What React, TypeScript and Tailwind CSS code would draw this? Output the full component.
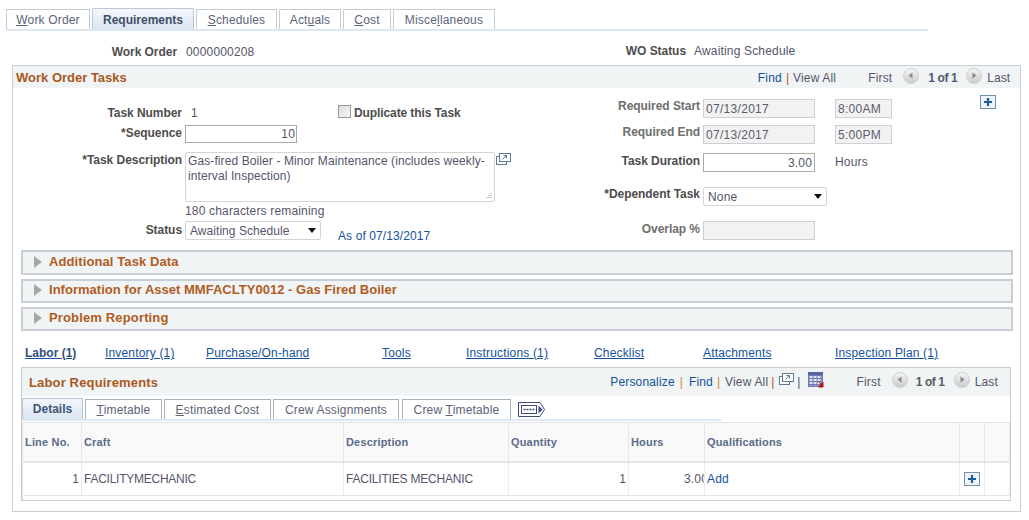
import React from "react";

const PlusIcon = () => (
  <svg width="16" height="14" viewBox="0 0 16 14" className="block">
    <rect x="0.5" y="0.5" width="15" height="13" fill="#f0f4f8" stroke="#6f93ad" />
    <path d="M8 3v8M4 7h8" stroke="#1d5f9c" strokeWidth="2.2" />
  </svg>
);

const PopupIcon = ({ className = "" }: { className?: string }) => (
  <svg width="15" height="12" viewBox="0 0 15 12" className={className}>
    <rect x="0.5" y="3.5" width="10" height="8" fill="#fff" stroke="#5f7a96" />
    <rect x="3.5" y="0.5" width="11" height="8" fill="#fff" stroke="#5f7a96" />
    <path d="M6.5 6.5l4-4M7.5 2.5h3v3" stroke="#5f7a96" fill="none" />
  </svg>
);

const NavBtn = ({ dir }: { dir: "l" | "r" }) => (
  <svg width="16" height="16" viewBox="0 0 16 16" className="block">
    <defs>
      <linearGradient id={"g" + dir} x1="0" y1="0" x2="0" y2="1">
        <stop offset="0" stopColor="#f6f6f6" />
        <stop offset="1" stopColor="#c9c9c9" />
      </linearGradient>
    </defs>
    <circle cx="8" cy="8" r="7.500" fill={"url(#g" + dir + ")"} stroke="#d0d0d0" />
    {dir === "l" ? <path d="M9.500 4.500v6l-4-3z" fill="#8a8a8a" /> : <path d="M6.500 4.500v6l4-3z" fill="#8a8a8a" />}
  </svg>
);

const GridIcon = () => (
  <svg width="16" height="16" viewBox="0 0 16 16" className="block">
    <rect x="0" y="0" width="15" height="15" fill="#6f78b0" />
    <rect x="0" y="0" width="15" height="3" fill="#59629f" />
    <path d="M1.500 4h12v9.500h-12z" fill="#dfe3f2" />
    <path d="M5 3v12M9 3v12M13 3v12M0 6.500h15M0 9.500h15M0 12.500h15" stroke="#6f78b0" />
    <path d="M10 9l4 4M15 10.500V15h-4.500z" stroke="#b01010" fill="#b01010" strokeWidth="1" />
  </svg>
);

const MenuTabIcon = () => (
  <svg width="27" height="15" viewBox="0 0 27 15" className="block">
    <path d="M0.500 0.500H22l4.500 7-4.500 7H0.500z" fill="#fff" stroke="#3b4a7d" />
    <rect x="3.500" y="3.500" width="15" height="8" fill="#fff" stroke="#3b4a7d" />
    <path d="M5.500 7.500h11" stroke="#3b4a7d" strokeDasharray="2 1" strokeWidth="1.500" />
    <path d="M20.500 3.500v8l4-4z" fill="#3b4a7d" />
  </svg>
);

const Caret = () => (
  <svg width="8" height="5" viewBox="0 0 8 5" className="block">
    <path d="M0 0h8L4 5z" fill="#111" />
  </svg>
);

const Tri = () => (
  <svg width="8" height="12" viewBox="0 0 8 12" className="block">
    <path d="M0 0l8 6-8 6z" fill="#a8a8a8" />
  </svg>
);

const U = ({ children }: { children: React.ReactNode }) => <span className="underline">{children}</span>;

const Tab = ({ w, active, children }: { w: string; active?: boolean; children: React.ReactNode }) => (
  <div
    className={
      active
        ? `${w} h-[21px] pt-[1px] flex items-center justify-center border border-b-0 border-[#bcc8d8] rounded-t-[2px] bg-gradient-to-b from-[#f4f7fb] to-[#dbe6f3] font-bold text-[#3f4f66] tracking-normal`
        : `${w} h-[20px] pt-[1px] flex items-center justify-center border border-b-0 border-[#c6ccd4] text-[#5a6478]`
    }
  >
    {children}
  </div>
);

const SubTab = ({ w, active, children }: { w: string; active?: boolean; children: React.ReactNode }) => (
  <div
    className={
      active
        ? `${w} h-[21px] flex items-center justify-center border border-b-0 border-[#b9c3cf] bg-gradient-to-b from-[#f4f7fb] to-[#dbe6f3] font-bold text-[#3f5578] tracking-normal`
        : `${w} h-[20px] flex items-center justify-center border border-b-0 border-[#a9b3bf] text-[#5a6478]`
    }
  >
    {children}
  </div>
);

const Label = ({ w, light, children }: { w: string; light?: boolean; children: React.ReactNode }) => (
  <div className={`${w} shrink-0 text-right font-bold tracking-[-0.05px] ${light ? "text-[#6e6e6e]" : "text-[#4d4d4d]"}`}>{children}</div>
);

const Collapsed = ({ title, h, track }: { title: string; h: string; track: string }) => (
  <div className={`${h} ml-[8px] w-[992px] flex items-center border-2 border-[#c9ced6] bg-[#f1f4f5] pl-[11px] gap-[7px]`}>
    <Tri />
    <span className={`text-[13px] font-bold text-[#b05c22] leading-none ${track}`}>{title}</span>
  </div>
);

const Disabled = ({ w, children }: { w: string; children?: React.ReactNode }) => (
  <div className={`${w} h-[19px] border border-[#ccd0d5] bg-[#f2f2f2] pl-[2px] flex items-center text-[#5c5c6c] tracking-[0.3px]`}>{children}</div>
);

const Th = ({ w, children }: { w: string; children?: React.ReactNode }) => (
  <div className={`${w} shrink-0 h-full border-r border-[#e6e6e6] pl-[2px] flex items-center text-[11px] font-bold text-[#5b6b8a]`}>{children}</div>
);

const Td = ({ w, right, children }: { w: string; right?: boolean; children?: React.ReactNode }) => (
  <div className={`${w} shrink-0 h-full border-r border-[#ececec] flex items-center overflow-hidden ${right ? "justify-end pr-[2px]" : "pl-[2px]"}`}>{children}</div>
);

export default function App() {
  return (
    <div className="w-[1029px] h-[520px] overflow-hidden bg-white text-[12px] leading-[14px] tracking-[0.17px] text-[#55556a] font-['Liberation_Sans',Arial,sans-serif]">
      {/* Top tabs */}
      <div className="pt-[8px] ml-[6px] w-[922px] h-[31px] border-b-[2px] border-[#dde8f4] flex items-end gap-[2px]">
        <Tab w="w-[84px]"><span><U>W</U>ork Order</span></Tab>
        <Tab w="w-[102px]" active>Requirements</Tab>
        <Tab w="w-[81px]"><span><U>S</U>chedules</span></Tab>
        <Tab w="w-[62px]"><span>Act<U>u</U>als</span></Tab>
        <Tab w="w-[48px]"><span><U>C</U>ost</span></Tab>
        <Tab w="w-[102px]"><span>Misce<U>l</U>laneous</span></Tab>
      </div>

      {/* WO row */}
      <div className="flex h-[34px] pt-[14px]">
        <Label w="w-[177px]">Work Order</Label>
        <div className="ml-[9px] w-[239px]">0000000208</div>
        <div className="w-[200px] -mt-[1px]"><Label w="w-[261px]">WO Status</Label></div>
        <div className="ml-[69px] -mt-[1px]">Awaiting Schedule</div>
      </div>

      {/* Main box */}
      <div className="ml-[12px] w-[1009px] h-[447px] border border-[#c9ced6]">
        <div className="h-[22px] bg-[#f1f4f5] flex items-center">
          <div className="ml-[3px] pt-[1px] text-[13px] font-bold text-[#a9581e] tracking-normal">Work Order Tasks</div>
          <div className="ml-auto flex items-center pr-[10px] pt-[1px] tracking-normal">
            <span className="text-[#16509b] tracking-[0.17px]">Find</span>
            <span className="ml-[4px] mr-[4px] text-[#b05c22]">|</span>
            <span className="tracking-[0.17px]">View All</span>
            <span className="ml-[32px] tracking-[0.17px]">First</span>
            <span className="ml-[11px] -mt-[4px]"><NavBtn dir="l" /></span>
            <span className="ml-[9px] font-bold text-[#4a5a78] tracking-[-0.4px]">1 of 1</span>
            <span className="ml-[9px] -mt-[4px]"><NavBtn dir="r" /></span>
            <span className="ml-[5px]">Last</span>
          </div>
        </div>

        {/* Form */}
        <div className="flex h-[162px]">
          {/* Left column */}
          <div className="w-[525px] shrink-0 flex flex-col">
            <div className="flex items-center h-[19px] mt-[15px]">
              <Label w="w-[169px]">Task Number</Label>
              <div className="ml-[9px] w-[7px]">1</div>
              <div className="ml-[140px] flex items-center gap-[3px]">
                <div className="w-[13px] h-[13px] -mt-[3px] border border-[#999] bg-gradient-to-br from-[#dcdcdc] to-[#f6f6f6]" />
                <span className="font-bold text-[#4d4d4d] tracking-[-0.1px]">Duplicate this Task</span>
              </div>
            </div>
            <div className="flex items-start h-[20px] mt-[3px]">
              <Label w="w-[169px]"><span className="block pt-[1px]">*Sequence</span></Label>
              <div className="ml-[3px] w-[112px] h-[18px] border border-[#a9a9a9] flex items-center justify-end pr-[1px]">10</div>
            </div>
            <div className="flex items-start h-[50px] mt-[7px]">
              <Label w="w-[169px]"><span className="block pt-[1px]">*Task Description</span></Label>
              <div className="ml-[3px] w-[310px] h-[50px] border border-[#d4d4d4] rounded-[2px] pl-[2px] pt-[1px] leading-[15px] tracking-[0.1px] relative">
                Gas-fired Boiler - Minor Maintenance (includes weekly-interval Inspection)
                <svg width="7" height="7" viewBox="0 0 7 7" className="absolute right-[2px] bottom-[2px]">
                  <path d="M5.500 1.500h1M3.500 3.500h1M5.500 3.500h1M1.500 5.500h1M3.500 5.500h1M5.500 5.500h1" stroke="#999" />
                </svg>
              </div>
              <PopupIcon className="ml-[1px] mt-[1px]" />
            </div>
            <div className="ml-[172px] mt-[2px] h-[14px]">180 characters remaining</div>
            <div className="flex items-start mt-[3px]">
              <Label w="w-[169px]"><span className="block pt-[2px]">Status</span></Label>
              <div className="ml-[3px] w-[136px] h-[19px] border border-[#d4d4d4] rounded-[2px] pl-[4px] pr-[4px] flex items-center justify-between tracking-[0.05px]">
                <span>Awaiting Schedule</span>
                <Caret />
              </div>
              <div className="ml-[17px] mt-[8px] text-[#16509b] tracking-[0.1px]">As of 07/13/2017</div>
            </div>
          </div>

          {/* Right column */}
          <div className="flex-1 flex flex-col">
            <div className="flex items-start mt-[11px] h-[19px]">
              <Label w="w-[162px]" light>Required Start</Label>
              <div className="ml-[3px]"><Disabled w="w-[112px]">07/13/2017</Disabled></div>
              <div className="ml-[20px]"><Disabled w="w-[57px]">8:00AM</Disabled></div>
              <div className="ml-[88px] -mt-[4px]"><PlusIcon /></div>
            </div>
            <div className="flex items-start mt-[7px] h-[19px]">
              <Label w="w-[162px]" light>Required End</Label>
              <div className="ml-[3px]"><Disabled w="w-[112px]">07/13/2017</Disabled></div>
              <div className="ml-[20px]"><Disabled w="w-[57px]">5:00PM</Disabled></div>
            </div>
            <div className="flex items-start mt-[9px] h-[19px]">
              <Label w="w-[162px]"><span className="block pt-[1px]">Task Duration</span></Label>
              <div className="ml-[3px] w-[112px] h-[19px] border border-[#a9a9a9] flex items-center justify-end pr-[2px]">3.00</div>
              <div className="ml-[20px] mt-[2px]">Hours</div>
            </div>
            <div className="flex items-start mt-[15px] h-[19px]">
              <Label w="w-[162px]">*Dependent Task</Label>
              <div className="ml-[3px] w-[124px] h-[19px] border border-[#d4d4d4] rounded-[2px] pl-[4px] pr-[4px] flex items-center justify-between">
                <span>None</span>
                <Caret />
              </div>
            </div>
            <div className="flex items-start mt-[15px] h-[19px]">
              <Label w="w-[162px]" light><span className="block pt-[1px]">Overlap %</span></Label>
              <div className="ml-[3px]"><Disabled w="w-[112px]" /></div>
            </div>
          </div>
        </div>

        {/* Collapsed sections */}
        <div className="flex flex-col gap-[4px]">
          <Collapsed title="Additional Task Data" h="h-[25px] pb-[2px]" track="tracking-[0.1px]" />
          <Collapsed title="Information for Asset MMFACLTY0012 - Gas Fired Boiler" h="h-[24px] pb-[3px]" track="tracking-[0.02px]" />
          <Collapsed title="Problem Reporting" h="h-[24px] pb-[3px]" track="tracking-[0.15px]" />
        </div>

        {/* Links */}
        <div className="flex h-[36px] pt-[15px] underline text-[#16509b]">
          <span className="ml-[12px] w-[80px] font-bold text-[#35507e] tracking-normal">Labor (1)</span>
          <span className="w-[101px]">Inventory (1)</span>
          <span className="w-[176px]">Purchase/On-hand</span>
          <span className="w-[84px]">Tools</span>
          <span className="w-[128px]">Instructions (1)</span>
          <span className="w-[109px]">Checklist</span>
          <span className="w-[132px]">Attachments</span>
          <span>Inspection Plan (1)</span>
        </div>

        {/* Labor grid */}
        <div className="ml-[8px] w-[990px] h-[134px] border border-[#c9ced6] flex flex-col">
          <div className="h-[28px] bg-[#f1f4f5] flex items-center shrink-0">
            <div className="ml-[7px] pt-[1px] text-[13px] font-bold text-[#a9581e] tracking-[0.15px]">Labor Requirements</div>
            <div className="ml-auto pr-[12px] flex items-center">
              <span className="text-[#16509b]">Personalize</span>
              <span className="ml-[5px] mr-[6px] text-[#d08a30] tracking-normal">|</span>
              <span className="text-[#16509b]">Find</span>
              <span className="ml-[4px] mr-[5px] text-[#d08a30] tracking-normal">|</span>
              <span>View All</span>
              <span className="ml-[3px] mr-[5px] text-[#b05c22] tracking-normal">|</span>
              <PopupIcon className="-mt-[6px]" />
              <span className="ml-[3px] mr-[8px] tracking-normal">|</span>
              <span className="-mt-[4px]"><GridIcon /></span>
              <span className="ml-[32px]">First</span>
              <span className="ml-[11px] -mt-[5px]"><NavBtn dir="l" /></span>
              <span className="ml-[8px] font-bold text-[#5a5a5a] tracking-[-0.4px]">1 of 1</span>
              <span className="ml-[9px] -mt-[5px]"><NavBtn dir="r" /></span>
              <span className="ml-[5px]">Last</span>
            </div>
          </div>
          <div className="flex items-end h-[25px] shrink-0 w-[699px] border-b-[2px] border-[#dde8f4] gap-[2px]">
            <SubTab w="w-[61px]" active>Details</SubTab>
            <SubTab w="w-[77px]"><span><U>T</U>imetable</span></SubTab>
            <SubTab w="w-[107px]"><span><U>E</U>stimated Cost</span></SubTab>
            <SubTab w="w-[126px]"><span>Crew Assi<U>g</U>nments</span></SubTab>
            <div className="ml-[1px] flex"><SubTab w="w-[109px]"><span>Crew <U>T</U>imetable</span></SubTab></div>
            <div className="ml-[5px] mb-[2px]"><MenuTabIcon /></div>
          </div>
          <div className="mt-[1px] border-l border-t border-[#e4e4e4] flex-1">
            <div className="h-[40px] flex bg-[#f9f9f9] border-b-[2px] border-[#e4e4e4]">
              <Th w="w-[59px]">Line No.</Th>
              <Th w="w-[262px]">Craft</Th>
              <Th w="w-[165px]">Description</Th>
              <Th w="w-[120px]">Quantity</Th>
              <Th w="w-[76px]">Hours</Th>
              <Th w="w-[255px]">Qualifications</Th>
              <Th w="w-[25px]" />
              <Th w="w-[25px]" />
            </div>
            <div className="h-[33px] flex border-b border-[#e4e4e4]">
              <Td w="w-[59px]" right>1</Td>
              <Td w="w-[262px]"><span className="tracking-[-0.25px]">FACILITYMECHANIC</span></Td>
              <Td w="w-[165px]"><span className="tracking-[-0.2px]">FACILITIES MECHANIC</span></Td>
              <Td w="w-[120px]" right>1</Td>
              <div className="w-[76px] shrink-0 h-full border-r border-[#ececec] flex items-center overflow-hidden pl-[55px]">3.00</div>
              <Td w="w-[255px]"><span className="text-[#16509b]">Add</span></Td>
              <div className="w-[25px] shrink-0 h-full border-r border-[#ececec] flex items-center pl-[4px]"><PlusIcon /></div>
              <Td w="w-[25px]" />
            </div>
          </div>
        </div>
      </div>
    </div>
  );
}
